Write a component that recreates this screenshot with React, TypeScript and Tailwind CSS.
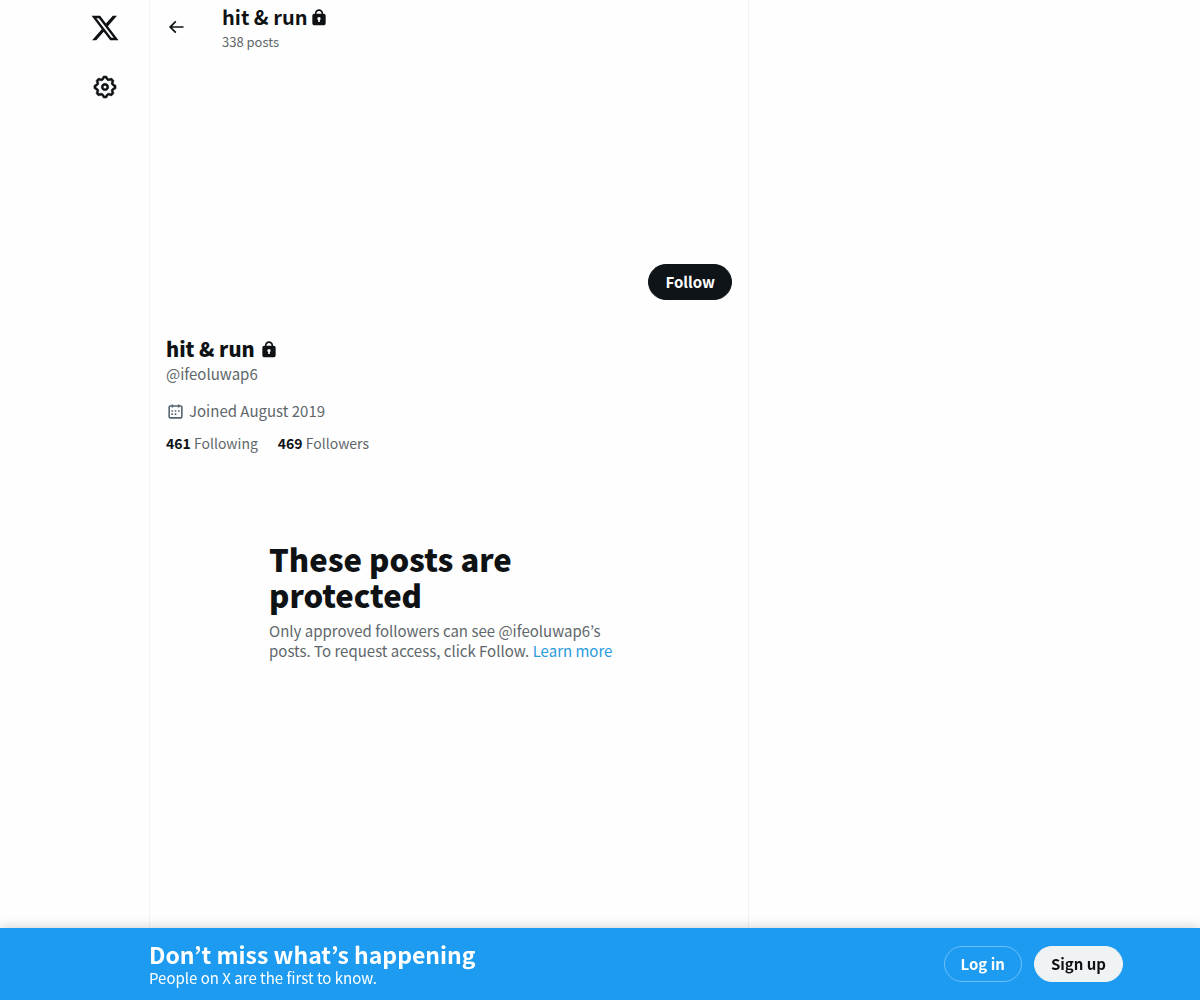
import type { ReactNode } from "react";

const paths = {
  x: "M18.244 2.25h3.308l-7.227 8.26 8.502 11.24H16.17l-5.214-6.817L4.99 21.75H1.68l7.73-8.835L1.254 2.25H8.08l4.713 6.231zm-1.161 17.52h1.833L7.084 4.126H5.117z",
  settings:
    "M10.54 1.75h2.92l1.57 2.36c.11.17.32.25.53.21l2.53-.59 2.17 2.17-.58 2.54c-.05.2.04.41.21.53l2.36 1.57v2.92l-2.36 1.57c-.17.12-.26.33-.21.53l.58 2.54-2.17 2.17-2.53-.59c-.21-.04-.42.04-.53.21l-1.57 2.36h-2.92l-1.58-2.36c-.11-.17-.32-.25-.52-.21l-2.54.59-2.17-2.17.58-2.54c.05-.2-.03-.41-.21-.53l-2.35-1.57v-2.92L4.1 8.97c.18-.12.26-.33.21-.53L3.73 5.9 5.9 3.73l2.54.59c.2.04.41-.04.52-.21l1.58-2.36zm1.07 2l-.98 1.47C10.05 6.08 9 6.5 7.99 6.27l-1.46-.34-.6.6.33 1.46c.24 1.01-.18 2.07-1.05 2.64l-1.46.98v.78l1.46.98c.87.57 1.29 1.63 1.05 2.64l-.33 1.46.6.6 1.46-.34c1.01-.23 2.06.19 2.64 1.05l.98 1.47h.78l.97-1.47c.58-.86 1.63-1.28 2.65-1.05l1.45.34.61-.6-.34-1.46c-.23-1.01.18-2.07 1.05-2.64l1.47-.98v-.78l-1.47-.98c-.87-.57-1.28-1.63-1.05-2.64l.34-1.46-.61-.6-1.45.34c-1.02.23-2.07-.19-2.65-1.05l-.97-1.47h-.78zM12 10.5c-.83 0-1.5.67-1.5 1.5s.67 1.5 1.5 1.5c.82 0 1.5-.67 1.5-1.5s-.68-1.5-1.5-1.5zM8.5 12c0-1.93 1.56-3.5 3.5-3.5 1.93 0 3.5 1.57 3.5 3.5s-1.57 3.5-3.5 3.5c-1.94 0-3.5-1.57-3.5-3.5z",
  back: "M7.414 13l5.043 5.04-1.414 1.42L3.586 12l7.457-7.46 1.414 1.42L7.414 11H21v2H7.414z",
  lock: "M17.5 8H17v-.25c0-2.76-2.24-5-5-5s-5 2.24-5 5V8h-.5C5.12 8 4 9.12 4 10.5v9C4 20.88 5.12 22 6.5 22h11c1.39 0 2.5-1.12 2.5-2.5v-9C20 9.12 18.89 8 17.5 8zM13 15.73V18h-2v-2.27c-.59-.34-1-.99-1-1.73 0-1.1.9-2 2-2 1.11 0 2 .9 2 2 0 .74-.4 1.39-1 1.73zM15 8H9v-.25c0-1.66 1.35-3 3-3 1.66 0 3 1.34 3 3V8z",
  calendar:
    "M7 4V3h2v1h6V3h2v1h1.5C19.89 4 21 5.12 21 6.5v12c0 1.38-1.11 2.5-2.5 2.5h-13C4.12 21 3 19.88 3 18.5v-12C3 5.12 4.12 4 5.5 4H7zm0 2H5.5c-.27 0-.5.22-.5.5v12c0 .28.23.5.5.5h13c.28 0 .5-.22.5-.5v-12c0-.28-.22-.5-.5-.5H17v1h-2V6H9v1H7V6zm-.2 4.3h2v2h-2zm0 4h2v2h-2zm4.2-4h2v2h-2zm0 4h2v2h-2zm4.2-4h2v2h-2z",
};

function Icon({ name, className }: { name: keyof typeof paths; className: string }) {
  return (
    <svg viewBox="0 0 24 24" aria-hidden="true" className={`shrink-0 fill-current ${className}`}>
      <path d={paths[name]} />
    </svg>
  );
}

function PillButton({ className, children }: { className: string; children: ReactNode }) {
  return (
    <button type="button" className={`h-9 rounded-full border px-4 text-[15px] leading-5 font-bold ${className}`}>
      {children}
    </button>
  );
}

function Stat({ value, label }: { value: number; label: string }) {
  return (
    <a href="#" className="text-[#60676b]">
      <span className="font-bold text-[#0f1214]">{value}</span> {label}
    </a>
  );
}

function SideNav() {
  return (
    <nav className="flex w-[88px] shrink-0 flex-col items-center gap-[3px]">
      <a href="#" aria-label="X" className="flex size-14 items-center justify-center">
        <Icon name="x" className="size-[30px]" />
      </a>
      <a href="#" aria-label="Settings" className="flex size-14 items-center justify-center">
        <Icon name="settings" className="size-[26px] stroke-current stroke-[0.4]" />
      </a>
    </nav>
  );
}

function Profile() {
  return (
    <main className="w-full max-w-[600px] border-x border-[#eff3f4]">
      <header className="flex h-[53px] items-center px-4">
        <button type="button" aria-label="Back" className="w-14">
          <Icon name="back" className="size-5" />
        </button>
        <div className="flex flex-col gap-[3px]">
          <h2 className="flex items-center gap-[2px] text-xl leading-7 font-bold">
            hit & run
            <Icon name="lock" className="size-5" />
          </h2>
          <p className="text-[13px] leading-4 text-[#60676b]">338 posts</p>
        </div>
      </header>

      <div className="h-[199px]" />

      <section className="px-4 pt-3">
        <div className="flex h-[71px] items-start justify-end">
          <PillButton className="border-[#0f1419] bg-[#0f1419] text-white">Follow</PillButton>
        </div>
        <h1 className="flex items-center gap-1 text-xl leading-7 font-extrabold">
          hit & run
          <Icon name="lock" className="size-5" />
        </h1>
        <p className="mt-px text-[#60676b]">@ifeoluwap6</p>
        <p className="mt-[17px] flex items-center gap-1 text-[#60676b]">
          <Icon name="calendar" className="size-[19px] text-[#536471]" />
          Joined August 2019
        </p>
        <div className="mt-3 flex gap-5 text-sm leading-5">
          <Stat value={461} label="Following" />
          <Stat value={469} label="Followers" />
        </div>
      </section>

      <section className="mx-auto mt-[88px] max-w-[360px]">
        <h2 className="text-[31px] leading-9 font-extrabold">These posts are protected</h2>
        <p className="mt-2 text-[#60676b]">
          Only approved followers can see @ifeoluwap6’s posts. To request access, click Follow.{" "}
          <a href="#" className="text-[#2a9bdc]">
            Learn more
          </a>
        </p>
      </section>
    </main>
  );
}

function LoginBar() {
  return (
    <div className="fixed inset-x-0 bottom-0 bg-[#1d9bf0] text-white shadow-[0_0_12px_rgba(0,0,0,0.2)]">
      <div className="mx-auto flex h-[72px] max-w-[1078px] items-center justify-between pr-4 pl-[88px]">
        <div>
          <p className="text-[23px] leading-7 font-bold">Don’t miss what’s happening</p>
          <p>People on X are the first to know.</p>
        </div>
        <div className="flex gap-3">
          <PillButton className="border-[#6bc0f8]">Log in</PillButton>
          <PillButton className="border-[#eff3f4] bg-[#eff3f4] text-[#0f1214]">Sign up</PillButton>
        </div>
      </div>
    </div>
  );
}

export default function App() {
  return (
    <div className="min-h-screen bg-[#fefefe] font-['Noto_Sans_CJK_KR','Noto_Sans',sans-serif] text-[15px] leading-5 text-[#0f1214]">
      <div className="mx-auto flex min-h-screen max-w-[1078px]">
        <SideNav />
        <Profile />
      </div>
      <LoginBar />
    </div>
  );
}
